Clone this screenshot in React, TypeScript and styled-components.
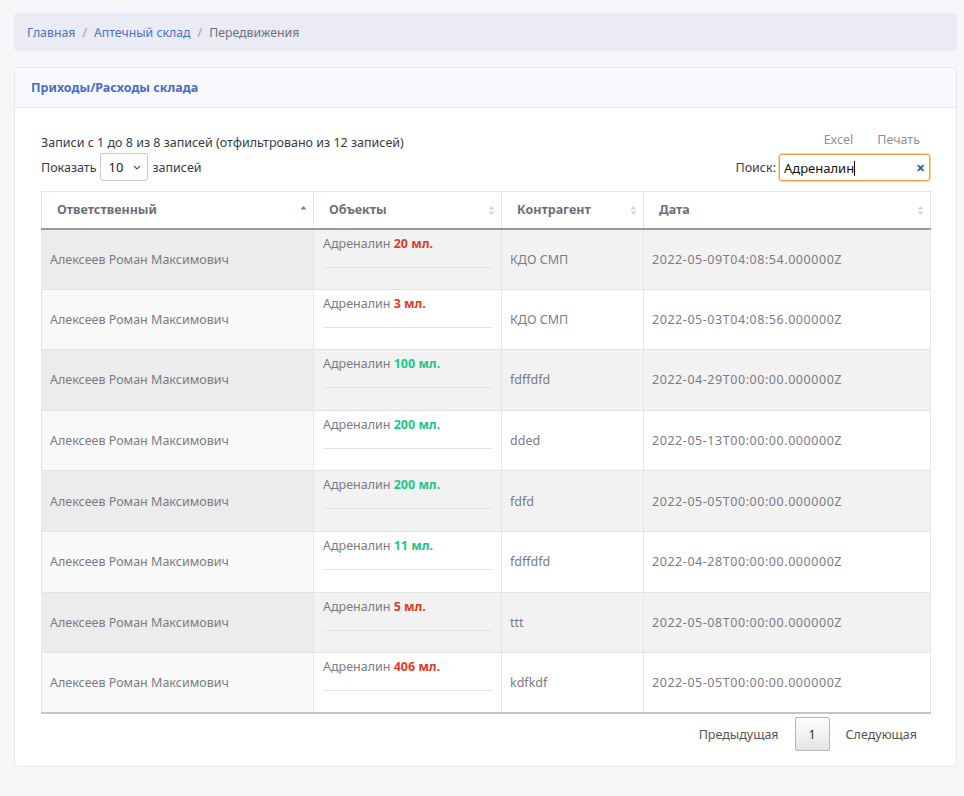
import React from 'react'
import styled, { createGlobalStyle } from 'styled-components'

type Amount = 'in' | 'out'

interface Movement {
  person: string
  amount: string
  kind: Amount
  partner: string
  date: string
}

const rows: Movement[] = [
  { person: 'Алексеев Роман Максимович', amount: '20 мл.', kind: 'out', partner: 'КДО СМП', date: '2022-05-09T04:08:54.000000Z' },
  { person: 'Алексеев Роман Максимович', amount: '3 мл.', kind: 'out', partner: 'КДО СМП', date: '2022-05-03T04:08:56.000000Z' },
  { person: 'Алексеев Роман Максимович', amount: '100 мл.', kind: 'in', partner: 'fdffdfd', date: '2022-04-29T00:00:00.000000Z' },
  { person: 'Алексеев Роман Максимович', amount: '200 мл.', kind: 'in', partner: 'dded', date: '2022-05-13T00:00:00.000000Z' },
  { person: 'Алексеев Роман Максимович', amount: '200 мл.', kind: 'in', partner: 'fdfd', date: '2022-05-05T00:00:00.000000Z' },
  { person: 'Алексеев Роман Максимович', amount: '11 мл.', kind: 'in', partner: 'fdffdfd', date: '2022-04-28T00:00:00.000000Z' },
  { person: 'Алексеев Роман Максимович', amount: '5 мл.', kind: 'out', partner: 'ttt', date: '2022-05-08T00:00:00.000000Z' },
  { person: 'Алексеев Роман Максимович', amount: '406 мл.', kind: 'out', partner: 'kdfkdf', date: '2022-05-05T00:00:00.000000Z' },
]

const SortIcon: React.FC<{ active?: boolean }> = ({ active }) => (
  <SortMark width="7" height="11" viewBox="0 0 7 11">
    <path d="M3.5 1 L6.5 4.5 L0.5 4.5 Z" fill={active ? '#6f74c8' : '#d6d6d6'} />
    {!active && <path d="M3.5 10 L6.5 6.5 L0.5 6.5 Z" fill="#d6d6d6" />}
  </SortMark>
)

const App: React.FC = () => (
  <>
    <GlobalStyle />
    <Page>
      <Breadcrumbs>
        <Crumb href="#">Главная</Crumb>
        <Divider>/</Divider>
        <Crumb href="#">Аптечный склад</Crumb>
        <Divider>/</Divider>
        <Current>Передвижения</Current>
      </Breadcrumbs>

      <Card>
        <CardHeader>Приходы/Расходы склада</CardHeader>
        <CardBody>
          <TopBar>
            <div>
              <Info>Записи с 1 до 8 из 8 записей (отфильтровано из 12 записей)</Info>
              <Length>
                Показать
                <SelectBox>
                  <span>10</span>
                  <svg width="8" height="5" viewBox="0 0 8 5">
                    <path d="M1 1 L4 4 L7 1" stroke="#555" strokeWidth="1.1" fill="none" />
                  </svg>
                </SelectBox>
                записей
              </Length>
            </div>
            <RightTools>
              <Buttons>
                <ToolButton>Excel</ToolButton>
                <ToolButton>Печать</ToolButton>
              </Buttons>
              <Search>
                Поиск:
                <SearchInput>
                  <span>
                    Адреналин<Caret />
                  </span>
                  <Clear>✕</Clear>
                </SearchInput>
              </Search>
            </RightTools>
          </TopBar>

          <Table>
            <colgroup>
              <col style={{ width: 272 }} />
              <col style={{ width: 188 }} />
              <col style={{ width: 142 }} />
              <col style={{ width: 287 }} />
            </colgroup>
            <thead>
              <tr>
                <Th>
                  Ответственный
                  <SortIcon active />
                </Th>
                <Th>
                  Объекты
                  <SortIcon />
                </Th>
                <Th>
                  Контрагент
                  <SortIcon />
                </Th>
                <Th>
                  Дата
                  <SortIcon />
                </Th>
              </tr>
            </thead>
            <tbody>
              {rows.map((r, i) => (
                <Row key={i} $odd={i % 2 === 0}>
                  <Td>{r.person}</Td>
                  <ObjectCell>
                    Адреналин <Qty $kind={r.kind}>{r.amount}</Qty>
                    <Rule />
                  </ObjectCell>
                  <Td>{r.partner}</Td>
                  <DateCell>{r.date}</DateCell>
                </Row>
              ))}
            </tbody>
          </Table>

          <Pager>
            <PageLink>Предыдущая</PageLink>
            <PageCurrent>1</PageCurrent>
            <PageLink>Следующая</PageLink>
          </Pager>
        </CardBody>
      </Card>
    </Page>
  </>
)

export default App

const GlobalStyle = createGlobalStyle`
  html, body {
    margin: 0;
    background: #f6f7f9;
    font-family: 'Noto Sans', 'Open Sans', sans-serif;
    font-size: 13px;
    color: #7b7c83;
  }
  * {
    box-sizing: border-box;
  }
`

const Page = styled.div`
  padding: 13px 7px 29px 14px;
  display: flex;
  flex-direction: column;
  gap: 16px;
`

const Breadcrumbs = styled.nav`
  display: flex;
  align-items: center;
  gap: 7px;
  height: 38px;
  padding: 0 13px;
  background: #eaebf4;
  border-radius: 4px;
  font-size: 12.3px;
`

const Crumb = styled.a`
  color: #4e6fc4;
  text-decoration: none;
`

const Divider = styled.span`
  color: #9a9ba6;
`

const Current = styled.span`
  color: #6e707e;
`

const Card = styled.section`
  background: #fff;
  border: 1px solid #e6e8ef;
  border-radius: 4px;
  overflow: hidden;
`

const CardHeader = styled.h6`
  margin: 0;
  height: 40px;
  display: flex;
  align-items: center;
  padding: 0 16px;
  background: #f8f9fc;
  border-bottom: 1px solid #e3e6f0;
  color: #4a6cc2;
  font-size: 12.5px;
  font-weight: 700;
`

const CardBody = styled.div`
  padding: 20px 26px 15px 26px;
`

const TopBar = styled.div`
  display: flex;
  justify-content: space-between;
  align-items: flex-end;
  margin-bottom: 10px;
  color: #3a3b45;
`

const Info = styled.div`
  font-size: 12.5px;
  line-height: 20px;
  margin-top: 5px;
`

const Length = styled.label`
  display: flex;
  align-items: center;
  gap: 4px;
  font-size: 12.5px;
`

const SelectBox = styled.div`
  display: flex;
  align-items: center;
  justify-content: space-between;
  width: 48px;
  height: 28px;
  padding: 0 6px 0 7px;
  border: 1px solid #c9c9c9;
  border-radius: 3px;
  background: #fff;
  color: #222;
  font-size: 13px;
`

const RightTools = styled.div`
  display: flex;
  flex-direction: column;
  align-items: flex-end;
  gap: 6px;
`

const Buttons = styled.div`
  display: flex;
  gap: 24px;
  margin-right: 10px;
`

const ToolButton = styled.span`
  color: #8d8e98;
  font-size: 12.5px;
`

const Search = styled.label`
  display: flex;
  align-items: center;
  gap: 3px;
  font-size: 12.5px;
  color: #3a3b45;
`

const SearchInput = styled.div`
  display: flex;
  align-items: center;
  justify-content: space-between;
  width: 151px;
  height: 27px;
  padding: 0 4px 0 4px;
  border: 1px solid #e8a33c;
  border-radius: 3px;
  box-shadow: 0 0 0 1px #f7d9a8;
  color: #111;
  font-size: 13px;
`

const Caret = styled.i`
  display: inline-block;
  width: 1px;
  height: 15px;
  background: #111;
  vertical-align: -3px;
`

const Clear = styled.span`
  color: #2b5a94;
  font-size: 11px;
  font-weight: 700;
`

const Table = styled.table`
  width: 889px;
  border-collapse: collapse;
  table-layout: fixed;
  border-bottom: 2px solid #c4c4c4;
  border-left: 1px solid #e6e6e6;
`

const Th = styled.th`
  position: relative;
  height: 37px;
  padding: 0 15px;
  text-align: left;
  font-weight: 700;
  font-size: 12.5px;
  color: #6e6f76;
  background: #fff;
  border: 1px solid #e6e6e6;
  border-bottom: 2px solid #9a9a9a;
  border-left: none;
`

const SortMark = styled.svg`
  position: absolute;
  right: 6px;
  top: 13px;
`

const Row = styled.tr<{ $odd: boolean }>`
  background: ${(p) => (p.$odd ? '#f2f2f2' : '#fff')};
  td:first-child {
    background: ${(p) => (p.$odd ? '#ececec' : '#f9f9f9')};
  }
`

const Td = styled.td`
  height: 60.6px;
  padding: 8px 8px;
  vertical-align: middle;
  border-right: 1px solid #e6e6e6;
  border-top: 1px solid #e3e3e3;
  font-size: 12.5px;
  line-height: 19px;
  color: #7b7c83;
`

const DateCell = styled(Td)`
  letter-spacing: 0.55px;
`

const ObjectCell = styled(Td)`
  vertical-align: top;
  padding: 4px 9px 7px;
`

const Qty = styled.b<{ $kind: Amount }>`
  color: ${(p) => (p.$kind === 'in' ? '#1cc88a' : '#e03b2b')};
  font-weight: 700;
`

const Rule = styled.hr`
  margin: 14px 0 12px;
  border: none;
  border-top: 1px solid #e3e3e3;
`

const Pager = styled.div`
  display: flex;
  justify-content: flex-end;
  align-items: center;
  gap: 16px;
  margin-top: 3px;
  padding-right: 13px;
  font-size: 12.5px;
  color: #3a3b45;
`

const PageLink = styled.span`
  color: #555;
`

const PageCurrent = styled.span`
  display: flex;
  align-items: center;
  justify-content: center;
  width: 35px;
  height: 34px;
  border: 1px solid #b4b4b4;
  border-radius: 2px;
  background: linear-gradient(#fff, #e4e4e4);
  color: #333;
`
